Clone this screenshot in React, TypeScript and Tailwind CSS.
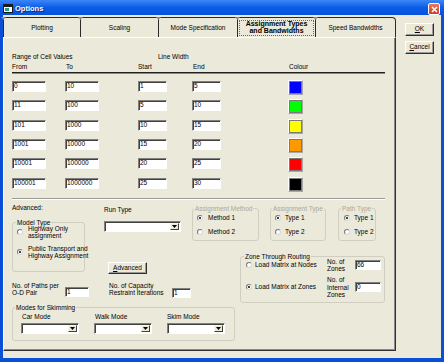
import React from "react";

const sunken =
  "bg-white border border-t-[#808080] border-l-[#808080] border-b-white border-r-white shadow-[inset_1px_1px_0_#404040]";

function Field({ value, className = "" }: { value?: string; className?: string }) {
  return (
    <div className={`${sunken} shrink-0 pl-[1px] text-[6.5px] leading-[8px] text-black whitespace-nowrap ${className}`}>
      {value}
    </div>
  );
}

function Select({ className = "" }: { className?: string }) {
  return (
    <div className={`${sunken} shrink-0 h-[11px] flex justify-end p-[1px] ${className}`}>
      <div className="w-[9px] h-full bg-[#ece9d8] border border-t-[#f6f6f6] border-l-[#f6f6f6] border-b-[#404040] border-r-[#404040] flex items-center justify-center">
        <svg width="5" height="3" viewBox="0 0 5 3">
          <path d="M0 0h5L2.5 3z" fill="#000" />
        </svg>
      </div>
    </div>
  );
}

function Radio({ checked }: { checked?: boolean }) {
  return (
    <div className="w-[6px] h-[6px] shrink-0 rounded-full bg-white border border-t-[#7a7a7a] border-l-[#7a7a7a] border-b-[#d8d8d8] border-r-[#d8d8d8] flex items-center justify-center">
      {checked && <div className="w-[2px] h-[2px] rounded-full bg-black" />}
    </div>
  );
}

function Group({
  label,
  disabled,
  className = "",
  legendLeft = "left-[3px]",
  children,
}: {
  label: string;
  disabled?: boolean;
  className?: string;
  legendLeft?: string;
  children?: React.ReactNode;
}) {
  return (
    <div className={`relative shrink-0 border border-[#d0cec0] rounded-[3px] ${className}`}>
      <span
        className={`absolute -top-[4px] ${legendLeft} px-[1px] bg-[#ebe9d9] leading-[7px] whitespace-nowrap ${
          disabled ? "text-[#aaa89e]" : "text-black"
        }`}
      >
        {label}
      </span>
      {children}
    </div>
  );
}

function Btn({ children, className = "" }: { children: React.ReactNode; className?: string }) {
  return (
    <div
      className={`shrink-0 flex items-center justify-center bg-[#ece9d8] border border-t-white border-l-white border-b-[#303030] border-r-[#303030] shadow-[inset_-1px_-1px_0_#9a9a9a] text-[6.5px] leading-none text-black ${className}`}
    >
      {children}
    </div>
  );
}

function Swatch({ color }: { color: string }) {
  return (
    <div className="ml-[67px] -mt-[1px] w-[15px] h-[15px] shrink-0 border border-t-white border-l-white border-b-[#a8a8a8] border-r-[#a8a8a8]">
      <div className={`w-full h-full border border-[#7a7a7a] ${color}`} />
    </div>
  );
}

function Tab({
  className,
  selected,
  children,
}: {
  className: string;
  selected?: boolean;
  children: React.ReactNode;
}) {
  return (
    <div
      className={`relative h-[20px] flex items-center justify-center border-t border-l border-[#2a2a2a] bg-[#ebe9d9] ${className}`}
    >
      <svg className="absolute -left-[3px] -top-[1px]" width="5" height="3" viewBox="0 0 5 3">
        <path d="M0 0h5L2.5 3z" fill="#8a8a8a" />
      </svg>
      {selected ? (
        <div className="mx-[1px] w-full h-[16px] border border-dotted border-[#6a6a6a] flex items-center justify-center text-center font-bold text-[7px] leading-[6.5px]">
          Assignment Types
          <br />
          and Bandwidths
        </div>
      ) : (
        <span className="text-[6.5px] whitespace-nowrap">{children}</span>
      )}
    </div>
  );
}

const rows: { v: string[]; c: string }[] = [
  { v: ["0", "10", "1", "5"], c: "bg-[#0000ff]" },
  { v: ["11", "100", "5", "10"], c: "bg-[#00ff00]" },
  { v: ["101", "1000", "10", "15"], c: "bg-[#ffff00]" },
  { v: ["1001", "10000", "15", "20"], c: "bg-[#ff9900]" },
  { v: ["10001", "100000", "20", "25"], c: "bg-[#ff0000]" },
  { v: ["100001", "1000000", "25", "30"], c: "bg-[#000000]" },
];

export default function App() {
  return (
    <div className="w-[444px] h-[362px] bg-[#0b4fd6] flex flex-col overflow-hidden select-none font-['Liberation_Sans',Arial,sans-serif] text-[6.5px] text-black">
      {/* Title bar */}
      <div className="h-[15px] shrink-0 bg-gradient-to-b from-[#3a86f8] via-[#0c5ce8] to-[#0652dc] flex items-start pl-[3px] pr-[4px]">
        <svg className="mt-[4px]" width="10" height="9" viewBox="0 0 10 9">
          <rect x="0.5" y="0.5" width="9" height="8" fill="#fff" stroke="#1a1a1a" />
          <rect x="1" y="1" width="8" height="2" fill="#1a1a1a" />
          <rect x="2" y="4" width="4" height="3" fill="#2aa57a" />
        </svg>
        <span className="ml-[2px] pt-[1px] text-white font-bold text-[7.5px] leading-[15px] [text-shadow:1px_1px_0_#0a2a80]">
          Options
        </span>
        <div className="ml-auto mt-[3px] w-[12px] h-[12px] rounded-[2px] border border-white bg-gradient-to-b from-[#e9775a] to-[#cc3b1a] flex items-center justify-center">
          <svg width="7" height="7" viewBox="0 0 7 7">
            <path d="M1 1L6 6M6 1L1 6" stroke="#fff" strokeWidth="1.5" />
          </svg>
        </div>
      </div>

      {/* Body */}
      <div className="flex-1 mx-[3px] mb-[4px] bg-[#ebe9d9] flex flex-col">
        <div className="flex pt-[2px]">
          {/* Left: tabs + panel */}
          <div className="w-[393px] flex flex-col shrink-0">
            <div className="flex">
              <Tab className="w-[77px]">Plotting</Tab>
              <Tab className="w-[78px]">Scaling</Tab>
              <Tab className="w-[79px]">Mode Specification</Tab>
              <Tab className="w-[78px]" selected>
                x
              </Tab>
              <Tab className="w-[81px] border-r rounded-tr-[4px]">Speed Bandwidths</Tab>
            </div>

            <div className="w-[393px] h-[314px] border border-t-white border-l-white border-r-[#303030] border-b-[#303030] shadow-[inset_-1px_-1px_0_#8a8a8a] pl-[8px] pt-[14px]">
              {/* header */}
              <div className="flex leading-[10px]">
                <div className="w-[146px]">Range of Cell Values</div>
                <div>Line Width</div>
              </div>
              <div className="flex leading-[10px]">
                <div className="w-[54px]">From</div>
                <div className="w-[72px]">To</div>
                <div className="w-[55px]">Start</div>
                <div className="w-[96px]">End</div>
                <div>Colour</div>
              </div>
              <div className="w-[373px] h-[2px] border-t border-t-[#202020] border-b border-b-[#8a8a8a]" />

              {/* rows */}
              <div className="mt-[7px] flex flex-col">
                {rows.map((r, i) => (
                  <div key={i} className="flex items-start h-[19.33px]">
                    <Field value={r.v[0]} className="w-[34px] h-[11px]" />
                    <Field value={r.v[1]} className="ml-[19px] w-[34px] h-[11px]" />
                    <Field value={r.v[2]} className="ml-[39px] w-[29px] h-[11px]" />
                    <Field value={r.v[3]} className="ml-[25px] w-[29px] h-[11px]" />
                    <Swatch color={r.c} />
                  </div>
                ))}
              </div>
              <div className="mt-[1px] w-[373px] h-[2px] border-t border-t-[#9a9a9a] border-b border-b-white" />

              {/* lower section */}
              <div className="flex pt-[3px]">
                {/* left group */}
                <div className="w-[180px] shrink-0 flex flex-col">
                  <div className="flex items-start">
                    <div className="w-[73px] flex flex-col">
                      <div className="leading-[10px]">Advanced:</div>
                      <Group label="Model Type" className="mt-[9px] h-[50px] w-[73px] pl-[4px] pt-[2px]">
                        <div className="flex items-center h-[14px]">
                          <Radio />
                          <div className="ml-[5px] leading-[7px] whitespace-nowrap">
                            Highway Only
                            <br />
                            assignment
                          </div>
                        </div>
                        <div className="flex items-center h-[14px] mt-[6px]">
                          <Radio checked />
                          <div className="ml-[5px] leading-[7px] whitespace-nowrap">
                            Public Transport and
                            <br />
                            Highway Assignment
                          </div>
                        </div>
                      </Group>
                    </div>
                    <div className="ml-[19px] flex flex-col items-start">
                      <div className="mt-[2.5px] leading-[10px]">Run Type</div>
                      <Select className="mt-[6px] w-[77px]" />
                      <Btn className="ml-[4px] mt-[29.5px] w-[39px] h-[12px]">
                        <span>
                          <span className="underline">A</span>dvanced
                        </span>
                      </Btn>
                    </div>
                  </div>
                  <div className="flex items-start mt-[8px]">
                    <div className="w-[53px] leading-[7px] whitespace-nowrap">
                      No. of Paths per
                      <br />
                      O-D Pair
                    </div>
                    <Field value="1" className="w-[24px] h-[10px] mt-[5px]" />
                    <div className="ml-[20px] w-[63px] leading-[7px] whitespace-nowrap">
                      No. of Capacity
                      <br />
                      Restraint Iterations
                    </div>
                    <Field value="1" className="w-[19px] h-[10px] mt-[6px]" />
                  </div>
                </div>

                {/* right group */}
                <div className="flex flex-col">
                  <div className="flex mt-[5px]">
                    <Group label="Assignment Method" disabled legendLeft="left-[1px]" className="w-[67px] h-[33px] pl-[4px] pt-[4px]">
                      <div className="flex items-center h-[10px] leading-[10px]">
                        <Radio checked />
                        <span className="ml-[5px]">Method 1</span>
                      </div>
                      <div className="flex items-center h-[10px] leading-[10px] mt-[4px]">
                        <Radio />
                        <span className="ml-[5px]">Method 2</span>
                      </div>
                    </Group>
                    <Group label="Assignment Type" disabled legendLeft="left-[1px]" className="ml-[11px] w-[56px] h-[33px] pl-[4px] pt-[4px]">
                      <div className="flex items-center h-[10px] leading-[10px]">
                        <Radio checked />
                        <span className="ml-[4px]">Type 1</span>
                      </div>
                      <div className="flex items-center h-[10px] leading-[10px] mt-[4px]">
                        <Radio />
                        <span className="ml-[4px]">Type 2</span>
                      </div>
                    </Group>
                    <Group label="Path Type" disabled legendLeft="left-[2px]" className="ml-[12px] w-[38px] h-[33px] pl-[5px] pt-[4px]">
                      <div className="flex items-center h-[10px] leading-[10px]">
                        <Radio checked />
                        <span className="ml-[4px]">Type 1</span>
                      </div>
                      <div className="flex items-center h-[10px] leading-[10px] mt-[4px]">
                        <Radio />
                        <span className="ml-[4px]">Type 2</span>
                      </div>
                    </Group>
                  </div>
                  <Group label="Zone Through Routing" legendLeft="left-[3px]" className="ml-[48px] mt-[15px] w-[145px] h-[47px] pl-[5px] pt-[1px]">
                    <div className="flex items-center h-[15px]">
                      <div className="w-[81px] flex items-center">
                        <Radio />
                        <span className="ml-[3px] whitespace-nowrap leading-[10px]">Load Matrix at Nodes</span>
                      </div>
                      <div className="w-[28px] leading-[7.5px] whitespace-nowrap">
                        No. of
                        <br />
                        Zones
                      </div>
                      <Field value="66" className="w-[26px] h-[10px]" />
                    </div>
                    <div className="flex items-center h-[23px] mt-[3px]">
                      <div className="w-[81px] flex items-center">
                        <Radio checked />
                        <span className="ml-[3px] whitespace-nowrap leading-[10px]">Load Matrix at Zones</span>
                      </div>
                      <div className="w-[28px] leading-[7.5px] whitespace-nowrap">
                        No. of
                        <br />
                        Internal
                        <br />
                        Zones
                      </div>
                      <Field value="0" className="w-[26px] h-[10px]" />
                    </div>
                  </Group>
                </div>
              </div>

              <Group label="Modes for Skimming" legendLeft="left-[2px]" className="mt-[4px] w-[223px] h-[34px] pl-[8px] pt-[5px]">
                <div className="flex">
                  <div className="flex flex-col w-[58px]">
                    <div className="leading-[7px] pl-[1px]">Car Mode</div>
                    <Select className="mt-[3px] w-[58px]" />
                  </div>
                  <div className="ml-[15px] flex flex-col w-[58px]">
                    <div className="leading-[7px] pl-[1px]">Walk Mode</div>
                    <Select className="mt-[3px] w-[58px]" />
                  </div>
                  <div className="ml-[15px] flex flex-col w-[58px]">
                    <div className="leading-[7px]">Skim Mode</div>
                    <Select className="mt-[3px] w-[58px]" />
                  </div>
                </div>
              </Group>
            </div>
          </div>

          {/* Right: buttons */}
          <div className="flex flex-col pl-[9px] pt-[6px] gap-[5px]">
            <Btn className="w-[29px] h-[13px] border-b-[#000] border-r-[#000]">
              <span>
                <span className="underline">O</span>K
              </span>
            </Btn>
            <Btn className="w-[29px] h-[13px]">
              <span>
                <span className="underline">C</span>ancel
              </span>
            </Btn>
          </div>
        </div>
      </div>
    </div>
  );
}
